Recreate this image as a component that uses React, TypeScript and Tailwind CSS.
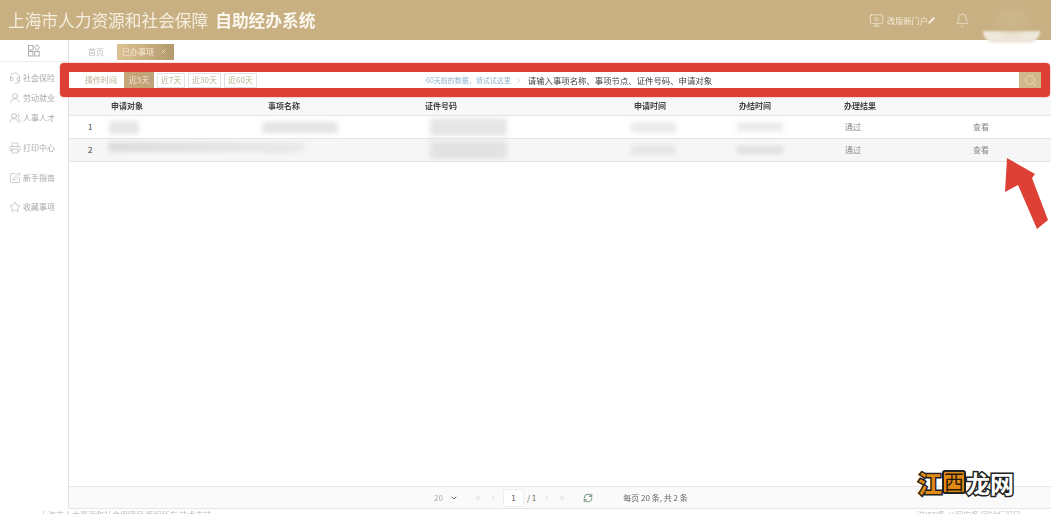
import { Headset, UserRound, UsersRound, Printer, SquarePen, Star, MonitorPlay, Pencil, Bell, Search, ChevronDown, ChevronRight, ChevronLeft, ChevronsLeft, ChevronsRight, RefreshCw, X } from "lucide-react";

const side = [
  { Icon: Headset, label: "社会保险", cls: "" },
  { Icon: UserRound, label: "劳动就业", cls: "" },
  { Icon: UsersRound, label: "人事人才", cls: "" },
  { Icon: Printer, label: "打印中心", cls: "mt-[10px]" },
  { Icon: SquarePen, label: "新手指南", cls: "mt-[10px]" },
  { Icon: Star, label: "收藏事项", cls: "mt-[9px]" },
];

const cols = "grid grid-cols-[42px_157px_157px_209px_105px_105px_129px_1fr] items-center";

function Blob({ w, h, c = "bg-[#e4e4e4]" }: { w: string; h: string; c?: string }) {
  return <div className={`${w} ${h} ${c} blur-[2.5px]`} />;
}

function Row({ n, even, a, b, c, d, e }: { n: string; even?: boolean; a: React.ReactNode; b: React.ReactNode; c: React.ReactNode; d: React.ReactNode; e: React.ReactNode }) {
  return (
    <div className={`${cols} h-[23px] border-b border-[#e4e4e4] text-[8px] text-[#888] ${even ? "bg-[#f6f6f6]" : "bg-white"}`}>
      <div className="pl-[19px] text-[#444]">{n}</div>
      <div className="-ml-[2px]">{a}</div>
      <div className="-ml-[6px]">{b}</div>
      <div className="pl-[5px]">{c}</div>
      <div className="-ml-[3px]">{d}</div>
      <div className="-ml-[2px]">{e}</div>
      <div className="pl-[1px] blur-[0.4px]">通过</div>
      <div className="blur-[0.4px]">查看</div>
    </div>
  );
}

function Chip({ label }: { label: string }) {
  return <span className="flex h-[15px] flex-none items-center justify-center border border-[#e2e2e2] text-[#bbb093] blur-[0.3px]">{label}</span>;
}

export default function App() {
  return (
    <div className="relative flex h-[514px] w-[1051px] flex-col overflow-hidden bg-white font-['Noto_Sans_CJK_SC','Noto_Sans',sans-serif]">
      <header className="flex h-[40px] shrink-0 items-center bg-[#c8b082] pl-[8px]">
        <div className="text-[16.7px] leading-none blur-[0.4px] text-[#f5eee0]">上海市人力资源和社会保障</div>
        <div className="ml-[7px] text-[16.7px] font-bold leading-none blur-[0.4px] text-[#fbf7ee]">自助经办系统</div>
        <div className="ml-auto flex items-center pr-[11px]">
          <MonitorPlay size={15} strokeWidth={1.2} className="text-[#f3ead8] blur-[0.3px]" />
          <span className="ml-[3px] text-[8.2px] text-[#f3ead8] blur-[0.4px]">改版新门户</span>
          <Pencil size={7} fill="#f7f0e2" className="text-[#f7f0e2] blur-[0.2px]" />
          <Bell size={15} strokeWidth={1.1} className="ml-[20px] text-[#f3ead8] blur-[0.2px]" />
          <div className="relative ml-[13px] h-[40px] w-[57px]">
            <div className="absolute left-0 top-[31px] h-[12px] w-[57px] rounded-b-[28px] bg-[#eee8da] blur-[1px]" />
            <div className="absolute left-[14px] top-[8px] h-[22px] w-[30px] rounded-full bg-[#cdb68c] blur-[5px]" />
          </div>
        </div>
      </header>

      <div className="flex min-h-0 flex-1">
        <aside className="w-[69px] shrink-0 border-r border-[#e2e2e2] bg-white">
          <div className="flex h-[22px] items-center justify-center border-b border-[#efefef]">
            <svg width="12" height="13" viewBox="0 0 12 13" fill="none" stroke="#a5a5a5" strokeWidth="0.9" className="blur-[0.3px]">
              <rect x="0.5" y="1.5" width="4.5" height="4.5" />
              <path d="M9 0.6 L11.4 3.5 L9 6.4 L6.6 3.5 Z" />
              <rect x="0.5" y="7.5" width="4.5" height="4.5" />
              <rect x="6.7" y="7.5" width="4.5" height="4.5" />
            </svg>
          </div>
          <nav className="pt-[6px] text-[8px] text-[#aaa]">
            {side.map(({ Icon, label, cls }) => (
              <div key={label} className={`flex h-[20px] items-center pl-[9px] ${cls}`}>
                <Icon size={12} strokeWidth={1} className="shrink-0 text-[#999] blur-[0.4px]" />
                <span className="ml-[2px] whitespace-nowrap blur-[0.4px]">{label}</span>
              </div>
            ))}
          </nav>
        </aside>

        <main className="flex min-w-0 flex-1 flex-col">
          <div className="flex h-[23px] shrink-0 items-center pl-[19px] text-[8px]">
            <span className="text-[#bbb] blur-[0.4px]">首页</span>
            <div className="ml-[13px] flex h-[16px] w-[57px] items-center bg-gradient-to-r from-[#dcc195] to-[#b39a6e] pl-[5px] text-[#f5ead5]">
              <span className="blur-[0.4px]">已办事项</span>
              <X size={7} className="ml-[6px]" />
            </div>
          </div>

          <div className="relative flex h-[34px] shrink-0 items-center pr-[10px] text-[8px]">
            <div className="absolute -left-[9px] right-[1px] top-0 bottom-0 rounded-[4px] border-[9px] border-[#dd3f35] shadow-[0_0_2px_#e88]" />
            <div className="relative flex h-[16px] flex-1 items-center bg-white">
              <span className="ml-[16px] w-[39px] text-[#bbb093] blur-[0.4px]">操作时间</span>
              <span className="flex h-full w-[30px] flex-none items-center justify-center bg-gradient-to-r from-[#c9a67a] to-[#bfa37a] text-[#f4e8d4] blur-[0.3px]">近3天</span>
              <div className="ml-[3px] flex gap-[3px]">
                <div className="w-[28px]"><Chip label="近7天" /></div>
                <div className="w-[33px]"><Chip label="近30天" /></div>
                <div className="w-[33px]"><Chip label="近60天" /></div>
              </div>
              <span className="ml-[169px] whitespace-nowrap text-[7px] text-[#8fb3cb] blur-[0.4px]">60天前的数据，请试试这里</span>
              <ChevronRight size={9} strokeWidth={1} className="ml-[3px] text-[#889]" />
              <span className="ml-[5px] whitespace-nowrap text-[8.4px] text-[#444] blur-[0.2px]">请输入事项名称、事项节点、证件号码、申请对象</span>
              <div className="ml-auto flex h-full w-[22px] items-center justify-center bg-[#d2b78a]">
                <Search size={13} strokeWidth={1} className="text-[#f4ecd9]" />
              </div>
            </div>
          </div>

          <div className={`${cols} h-[19px] shrink-0 border-b border-[#e4e4e4] bg-[#f8f8f8] text-[8px] font-bold text-[#444]`}>
            <div />
            <div className="blur-[0.3px]">申请对象</div>
            <div className="blur-[0.3px]">事项名称</div>
            <div className="blur-[0.3px]">证件号码</div>
            <div className="blur-[0.3px]">申请时间</div>
            <div className="blur-[0.3px]">办结时间</div>
            <div className="blur-[0.3px]">办理结果</div>
            <div />
          </div>

          <div className="shrink-0">
            <Row n="1"
              a={<Blob w="w-[30px]" h="h-[13px]" c="bg-[#e6e6e6]" />}
              b={<Blob w="w-[76px]" h="h-[11px]" c="bg-[#e4e4e4]" />}
              c={<Blob w="w-[77px]" h="h-[18px]" c="bg-[#e6e6e6]" />}
              d={<Blob w="w-[45px]" h="h-[11px]" c="bg-[#ebebeb]" />}
              e={<Blob w="w-[46px]" h="h-[8px]" c="bg-[#e8e8e8]" />}
            />
            <Row n="2" even
              a={<div className="-mt-[6px] h-[10px] w-[195px] bg-gradient-to-r from-[#dcdcdc] to-[#ebebeb] blur-[2px]" />}
              b={<Blob w="w-[30px]" h="h-[4px]" c="bg-[#e8e8e8]" />}
              c={<Blob w="w-[77px]" h="h-[18px]" c="bg-[#e2e2e2]" />}
              d={<Blob w="w-[45px]" h="h-[10px]" c="bg-[#e6e6e6]" />}
              e={<Blob w="w-[46px]" h="h-[8px]" c="bg-[#e0e0e0]" />}
            />
          </div>

          <div className="flex-1" />

          <div className="flex h-[23px] shrink-0 items-center border-y border-[#e6e6e6] bg-[#fafafa] pl-[365px] text-[8px] text-[#888]">
            <span className="text-[#aaa] blur-[0.3px]">20</span>
            <ChevronDown size={8} strokeWidth={2.4} className="ml-[7px] text-[#555]" />
            <ChevronsLeft size={8} className="ml-[16px] text-[#ccc]" />
            <ChevronLeft size={8} className="ml-[7px] text-[#ccc]" />
            <span className="ml-[6px] flex h-[18px] w-[21px] items-center justify-center rounded-[2px] border border-[#eee] bg-white text-[#555]">1</span>
            <span className="ml-[3px] text-[#666]">/ 1</span>
            <ChevronRight size={8} className="ml-[7px] text-[#ccc]" />
            <ChevronsRight size={8} className="ml-[7px] text-[#ccc]" />
            <RefreshCw size={10} strokeWidth={2.6} className="ml-[17px] text-[#7d9c85] blur-[0.4px]" />
            <span className="ml-[30px] text-[8px] text-[#666] blur-[0.3px]">每页 20 条, 共 2 条</span>
          </div>
        </main>
      </div>

      <div className="flex h-[5px] shrink-0 overflow-hidden pl-[40px] text-[8px] leading-[12px] text-[#bbb] blur-[0.4px]">
        <span>上海市人力资源和社会保障局 版权所有 技术支持</span>
        <span className="ml-auto pr-[30px]">沪ICP备 公网安备 网站标识码</span>
      </div>

      <svg className="absolute left-[1000px] top-[150px] h-[85px] w-[51px] blur-[0.4px]" viewBox="1000 150 51 85">
        <polygon points="1007,158 1035,174 1032,178 1048,220 1037,229 1018,185 1005,192" fill="#dd4135" />
      </svg>

      <div className="absolute left-[918px] top-[470px] flex text-[24px] font-bold leading-[26px]">
        <span className="text-[#e08a14] [-webkit-text-stroke:3px_#222] [paint-order:stroke_fill]">江</span>
        <span className="flex h-[24px] w-[24px] items-center justify-center rounded-[3px] border-2 border-[#222] bg-[#e08a14] text-[20px] font-normal text-[#2a1a05]">西</span>
        <span className="text-white [-webkit-text-stroke:3px_#222] [paint-order:stroke_fill]">龙网</span>
      </div>
    </div>
  );
}
